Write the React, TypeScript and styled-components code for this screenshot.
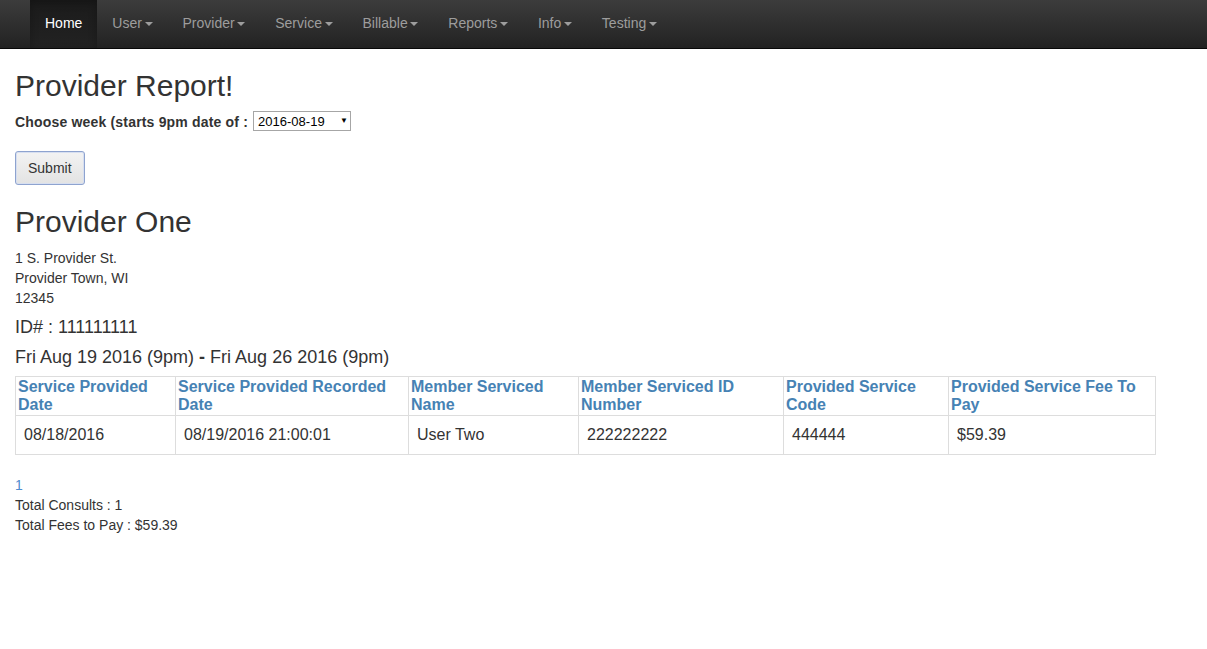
import React from "react";
import styled, { createGlobalStyle, css } from "styled-components";

const GlobalStyle = createGlobalStyle`
  html, body { margin: 0; padding: 0; background: #fff; }
  body {
    font-family: "Liberation Sans", Arial, Helvetica, sans-serif;
    font-size: 14px;
    line-height: 20px;
    color: #333;
  }
  * { box-sizing: border-box; }
`;

const Navbar = styled.nav`
  height: 49px;
  background: linear-gradient(to bottom, #3c3c3c 0%, #222 100%);
  border-bottom: 1px solid #080808;
`;

const NavList = styled.ul`
  display: flex;
  margin: 0;
  padding: 0 0 0 30px;
  list-style: none;
  height: 48px;
`;

const NavItem = styled.li<{ $active?: boolean }>`
  display: flex;
  align-items: center;
  padding: 0 15px 2px;
  height: 48px;
  color: #9d9d9d;
  font-size: 14px;
  line-height: 20px;
  cursor: pointer;
  ${(p) =>
    p.$active &&
    css`
      color: #fff;
      background: linear-gradient(to bottom, #1b1b1b 0%, #222 100%);
      box-shadow: inset 0 3px 9px rgba(0, 0, 0, 0.25);
    `}
`;

const Caret = styled.span`
  display: inline-block;
  width: 0;
  height: 0;
  margin-left: 2.6px;
  margin-top: 2px;
  border-top: 4px solid currentColor;
  border-left: 4px solid transparent;
  border-right: 4px solid transparent;
`;

const Main = styled.main`
  padding: 0 15px;
`;

const PageTitle = styled.h2`
  margin: 20px 0 10px;
  font-size: 30px;
  font-weight: 400;
  line-height: 33px;
  color: #333;
`;

const WeekForm = styled.form`
  display: flex;
  align-items: center;
  height: 20px;
  margin: 0;
`;

const WeekLabel = styled.label`
  font-weight: 700;
  font-size: 14px;
  letter-spacing: 0.18px;
  margin-right: 5px;
`;

const SelectBox = styled.span`
  display: inline-flex;
  align-items: center;
  width: 98px;
  height: 20px;
  border: 1px solid #a6a6a6;
  background: #fff;
  margin-top: -2px;
`;

const Select = styled.select`
  appearance: none;
  -webkit-appearance: none;
  border: none;
  outline: none;
  background: transparent;
  font-family: "Liberation Sans", Arial, sans-serif;
  font-size: 13px;
  color: #000;
  padding: 0 0 0 4px;
  height: 18px;
  width: 84px;
`;

const SelectArrow = styled.span`
  font-size: 8px;
  color: #000;
  margin-left: 2px;
  line-height: 1;
`;

const SubmitButton = styled.button`
  display: block;
  margin-top: 19px;
  height: 34px;
  padding: 0 12px;
  font-family: "Liberation Sans", Arial, sans-serif;
  font-size: 14px;
  color: #333;
  background: linear-gradient(to bottom, #f3f3f3 0%, #e3e3e3 100%);
  border: 1px solid #8ea3cf;
  border-radius: 3px;
  box-shadow: inset 0 0 0 1px #d7dff0;
`;

const ProviderName = styled.h2`
  margin: 20px 0 10px;
  font-size: 30px;
  font-weight: 400;
  line-height: 33px;
  color: #333;
`;

const Address = styled.address`
  font-style: normal;
  font-size: 14px;
  line-height: 20px;
  color: #333;
`;

const InfoLine = styled.h4<{ $tight?: boolean }>`
  margin: 10px 0 ${(p) => (p.$tight ? "8px" : "10px")};
  font-size: 18px;
  font-weight: 400;
  line-height: 19.8px;
  color: #333;
`;

const Dash = styled.b`
  font-weight: 700;
`;

const ReportTable = styled.table`
  width: 1140px;
  border-collapse: collapse;
  border: 1px solid #ddd;
  table-layout: fixed;
  margin: 0;
`;

const HeadCell = styled.th`
  padding: 1px 2px;
  text-align: left;
  vertical-align: top;
  font-size: 16px;
  line-height: 18px;
  font-weight: 700;
  color: #4682b4;
  border: 1px solid #ddd;
`;

const BodyCell = styled.td`
  padding: 8px;
  font-size: 16px;
  line-height: 22px;
  color: #333;
  border: 1px solid #ddd;
`;

const PageLink = styled.a`
  display: block;
  margin-top: 20px;
  color: #4f8ccf;
  text-decoration: none;
  font-size: 14px;
  line-height: 20px;
`;

const TotalLine = styled.div`
  font-size: 14px;
  line-height: 20px;
  color: #333;
`;

const navItems = ["User", "Provider", "Service", "Billable", "Reports", "Info", "Testing"];

const columns = [
  { label: "Service Provided Date", width: 160 },
  { label: "Service Provided Recorded Date", width: 233 },
  { label: "Member Serviced Name", width: 170 },
  { label: "Member Serviced ID Number", width: 205 },
  { label: "Provided Service Code", width: 165 },
  { label: "Provided Service Fee To Pay", width: 207 },
];

const rows = [
  ["08/18/2016", "08/19/2016 21:00:01", "User Two", "222222222", "444444", "$59.39"],
];

export default function App() {
  return (
    <>
      <GlobalStyle />
      <Navbar>
        <NavList>
          <NavItem $active>Home</NavItem>
          {navItems.map((n) => (
            <NavItem key={n}>
              {n}
              <Caret />
            </NavItem>
          ))}
        </NavList>
      </Navbar>
      <Main>
        <PageTitle>Provider Report!</PageTitle>
        <WeekForm onSubmit={(e) => e.preventDefault()}>
          <WeekLabel htmlFor="week">Choose week (starts 9pm date of :</WeekLabel>
          <SelectBox>
            <Select id="week" defaultValue="2016-08-19">
              <option value="2016-08-19">2016-08-19</option>
              <option value="2016-08-12">2016-08-12</option>
            </Select>
            <SelectArrow>▼</SelectArrow>
          </SelectBox>
        </WeekForm>
        <SubmitButton type="button">Submit</SubmitButton>
        <ProviderName>Provider One</ProviderName>
        <Address>
          1 S. Provider St.
          <br />
          Provider Town, WI
          <br />
          12345
        </Address>
        <InfoLine>ID# : 111111111</InfoLine>
        <InfoLine $tight>
          Fri Aug 19 2016 (9pm) <Dash>-</Dash> Fri Aug 26 2016 (9pm)
        </InfoLine>
        <ReportTable>
          <colgroup>
            {columns.map((c) => (
              <col key={c.label} style={{ width: c.width }} />
            ))}
          </colgroup>
          <thead>
            <tr>
              {columns.map((c) => (
                <HeadCell key={c.label}>{c.label}</HeadCell>
              ))}
            </tr>
          </thead>
          <tbody>
            {rows.map((r, i) => (
              <tr key={i}>
                {r.map((v, j) => (
                  <BodyCell key={j}>{v}</BodyCell>
                ))}
              </tr>
            ))}
          </tbody>
        </ReportTable>
        <PageLink href="#">1</PageLink>
        <TotalLine>Total Consults : 1</TotalLine>
        <TotalLine>Total Fees to Pay : $59.39</TotalLine>
      </Main>
    </>
  );
}
